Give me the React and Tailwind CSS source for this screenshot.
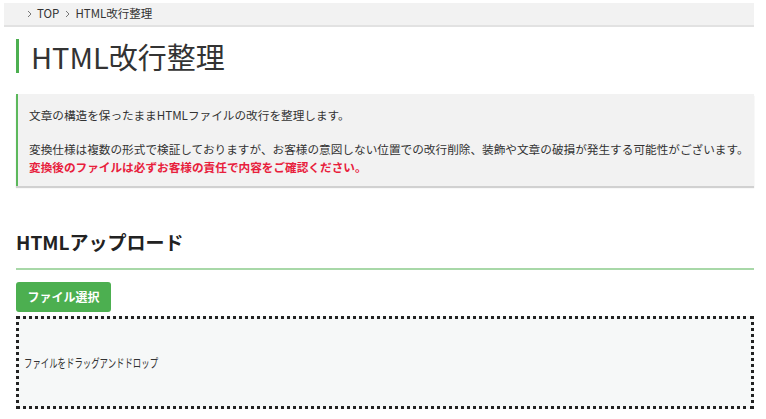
import React from "react";

function Chevron() {
  return (
    <svg width="5" height="8" viewBox="0 0 5 8" className="shrink-0">
      <path d="M1 1 L4 4 L1 7" fill="none" stroke="#777" strokeWidth="1" />
    </svg>
  );
}

export default function App() {
  return (
    <div className="w-[766px] h-[419px] bg-white overflow-hidden font-['Noto_Sans_CJK_JP','Noto_Sans',sans-serif] text-[#333]">
      <div className="pt-[3px] pl-[4px] pr-[12px]">
        <div className="h-[24px] bg-[#f2f2f2] border-b-2 border-[#e2e2e2] flex items-center pl-[23px] text-[11.5px] leading-none text-[#333]">
          <Chevron />
          <span className="ml-[5px]">TOP</span>
          <span className="ml-[6px]"><Chevron /></span>
          <span className="ml-[5px]">HTML改行整理</span>
        </div>
      </div>

      <div className="pl-[16px] pr-[12px]">
        <h1 className="mt-[12px] border-l-[3px] border-[#4caf50] pl-[12px] text-[29px] leading-[34px] font-normal text-[#333]">
          HTML改行整理
        </h1>

        <div className="mt-[21px] bg-[#f2f2f2] border-l-2 border-[#5cb85c] shadow-[0_2px_1px_rgba(0,0,0,0.18)] pl-[11px] pt-[12px] pb-[10px] text-[11.65px] leading-[18px] text-[#333]">
          <p>文章の構造を保ったままHTMLファイルの改行を整理します。</p>
          <p className="mt-[16px]">
            変換仕様は複数の形式で検証しておりますが、お客様の意図しない位置での改行削除、装飾や文章の破損が発生する可能性がございます。
          </p>
          <p className="font-bold text-[#e8203c]">変換後のファイルは必ずお客様の責任で内容をご確認ください。</p>
        </div>

        <h2 className="mt-[42px] text-[19px] leading-[28px] font-bold text-[#222]">HTMLアップロード</h2>
        <div className="mt-[12px] h-[2px] bg-[#a8d8a8]"></div>

        <button className="mt-[12px] w-[95px] h-[30px] rounded-[3px] bg-[#4caf50] text-white text-[12px] font-bold flex items-center justify-center">
          ファイル選択
        </button>

        <div className="mt-[4px] h-[93px] border-[3px] border-dotted border-[#222] bg-[#f6f8f8] flex items-center pl-[5px]">
          <span className="inline-block text-[12px] leading-none text-[#333] origin-left scale-x-[0.7] whitespace-nowrap">
            ファイルをドラッグアンドドロップ
          </span>
        </div>
      </div>
    </div>
  );
}
